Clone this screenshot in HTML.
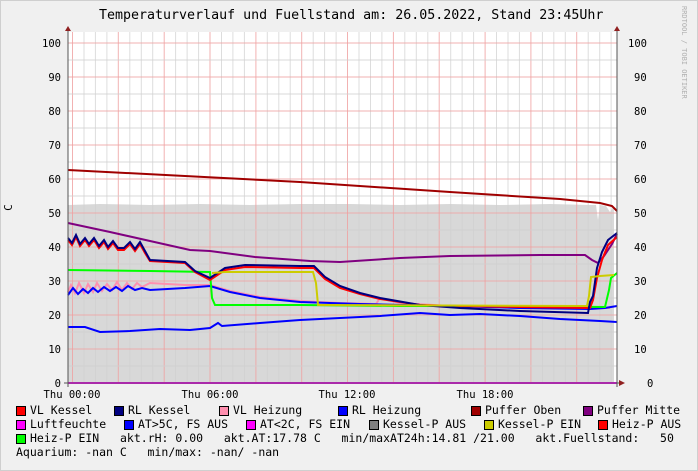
<!DOCTYPE html>
<html><head><meta charset="utf-8"><style>
html,body{margin:0;padding:0}
body{width:698px;height:471px;background:#f0f0f0;position:relative;overflow:hidden;font-family:"DejaVu Sans Mono","Liberation Mono",monospace;color:#000}
.b{position:absolute;left:0;top:0;width:696px;height:469px;border:1px solid #cfcfcf}
.t{position:absolute;white-space:pre}
.sq{position:absolute;width:8px;height:8px;border:1px solid #000}
.lg{font-size:11.5px}
</style></head><body>
<div class="b"></div>
<div class="t" style="left:99px;top:8px;font-size:13.3px">Temperaturverlauf und Fuellstand am: 26.05.2022, Stand 23:45Uhr</div>
<div class="t" style="left:680px;top:6px;font-size:7px;color:#b0b0b0;writing-mode:vertical-rl">RRDTOOL / TOBI OETIKER</div>
<div class="t" style="left:5px;top:201px;font-size:11px;transform:rotate(-90deg)">C</div>
<svg width="698" height="471" style="position:absolute;left:0;top:0">
<rect x="68" y="32" width="549" height="351" fill="#fff"/>
<polygon points="68,205 100,204 150,205 200,204 250,205 300,204 350,204 400,205 450,204 500,205 550,204 590,205 596,205 598,220 600,205 606,206 610,212 614,206 614,383 68,383" fill="#d8d8d8"/>
<g id="grid"></g>
<polyline fill="none" stroke="#a00000" stroke-width="2" points="68,170 300,182 450,192 560,199 600,203 612,206 617,211"/>
<polyline fill="none" stroke="#800080" stroke-width="2" points="68,223 110,232 150,241 190,250 210,251 255,257 310,261 340,262 400,258 450,256 540,255 585,255 592,260 598,263 604,256 612,244 617,234"/>
<polyline fill="none" stroke="#ff8faf" stroke-width="2" points="68,292 71,285 75,293 79,283 84,293 88,284 93,292 97,283 102,291 107,284 112,290 117,282 122,290 127,283 132,289 137,283 142,287 150,283 185,285 210,285 230,291 260,297 300,301 340,303 376,304 380,298 400,303 450,306 520,307 590,307 610,308"/>
<polyline fill="none" stroke="#0000ff" stroke-width="2" points="68,295 73,288 78,294 83,289 88,293 93,288 98,292 104,287 110,291 116,287 122,291 128,286 135,290 142,288 150,290 185,288 210,286 230,292 260,298 300,302 360,304 450,306 520,308 590,309 605,308 617,306"/>
<polyline fill="none" stroke="#00ff00" stroke-width="2" points="68,270 150,271 210,272 212,298 215,305 300,305 400,306 500,306 605,307 609,290 611,278 617,273"/>
<polyline fill="none" stroke="#ff0000" stroke-width="2" points="68,240 72,245 76,237 80,246 85,240 89,246 94,240 99,248 104,242 108,249 113,243 118,250 124,250 130,244 135,251 140,244 145,253 150,261 185,263 195,272 210,280 225,270 245,267 300,268 314,268 325,279 340,288 360,294 380,299 420,305 460,306 520,307 590,308 593,300 597,278 602,260 608,245 617,237"/>
<polyline fill="none" stroke="#000080" stroke-width="2" points="68,238 72,243 76,235 80,244 85,238 89,244 94,238 99,246 104,240 108,247 113,241 118,248 124,248 130,242 135,249 140,242 145,251 150,260 185,262 195,271 210,278 225,268 245,265 300,266 314,266 325,277 340,286 360,293 380,298 420,305 460,308 520,311 588,313 590,302 593,296 597,268 602,252 608,240 617,233"/>
<polyline fill="none" stroke="#cccc00" stroke-width="2" points="212,273 225,272 300,272 313,272 316,283 318,305 320,305 587,306 589,296 591,277 600,276 614,275"/>
<polyline fill="none" stroke="#0000ff" stroke-width="2" points="68,327 85,327 100,332 130,331 160,329 190,330 210,328 218,323 222,326 260,323 300,320 340,318 380,316 420,313 450,315 480,314 520,316 560,319 600,321 617,322"/>
<line x1="68" y1="383" x2="617" y2="383" stroke="#ff00ff" stroke-width="2"/>
<line x1="68" y1="30" x2="68" y2="387" stroke="#555"/>
<line x1="617" y1="30" x2="617" y2="387" stroke="#555"/>
<line x1="64" y1="383" x2="622" y2="383" stroke="#555"/>
<polygon points="65,31 71,31 68,26" fill="#902020"/>
<polygon points="614,31 620,31 617,26" fill="#902020"/>
<polygon points="619,380 619,386 625,383" fill="#902020"/>
<g font-size="10.5" font-family="DejaVu Sans Mono,monospace" fill="#000">
<text x="61" y="47" text-anchor="end">100</text><text x="628" y="47">100</text>
<text x="61" y="81" text-anchor="end">90</text><text x="634" y="81">90</text>
<text x="61" y="115" text-anchor="end">80</text><text x="634" y="115">80</text>
<text x="61" y="149" text-anchor="end">70</text><text x="634" y="149">70</text>
<text x="61" y="183" text-anchor="end">60</text><text x="634" y="183">60</text>
<text x="61" y="217" text-anchor="end">50</text><text x="634" y="217">50</text>
<text x="61" y="251" text-anchor="end">40</text><text x="634" y="251">40</text>
<text x="61" y="285" text-anchor="end">30</text><text x="634" y="285">30</text>
<text x="61" y="319" text-anchor="end">20</text><text x="634" y="319">20</text>
<text x="61" y="353" text-anchor="end">10</text><text x="634" y="353">10</text>
<text x="61" y="387" text-anchor="end">0</text><text x="647" y="387">0</text>
<text x="72" y="398" text-anchor="middle">Thu 00:00</text>
<text x="210" y="398" text-anchor="middle">Thu 06:00</text>
<text x="347" y="398" text-anchor="middle">Thu 12:00</text>
<text x="485" y="398" text-anchor="middle">Thu 18:00</text>
</g>
</svg>
<script>
(function(){var g=document.getElementById('grid'),s='';
for(var x=72.5;x<617;x+=11.46){var i=Math.round((x-72.5)/11.46);var r=i%4==0;s+='<line x1="'+x.toFixed(1)+'" y1="32" x2="'+x.toFixed(1)+'" y2="383" stroke="'+(r?'#f0a0a0':'#d0d0d0')+'" stroke-width="1" opacity="'+(r?0.8:0.7)+'"/>';}
for(var v=5;v<=100;v+=5){var y=383-3.4*v;var r=v%10==0;s+='<line x1="68" y1="'+y+'" x2="617" y2="'+y+'" stroke="'+(r?'#f0a0a0':'#d0d0d0')+'" opacity="0.8"/>';}
g.innerHTML=s;})();
</script>
<div class="lg">
<div class="sq" style="left:16px;top:406px;background:#ff0000"></div><div class="t" style="left:30px;top:403px">VL Kessel</div>
<div class="sq" style="left:114px;top:406px;background:#000080"></div><div class="t" style="left:128px;top:403px">RL Kessel</div>
<div class="sq" style="left:219px;top:406px;background:#ff8faf"></div><div class="t" style="left:233px;top:403px">VL Heizung</div>
<div class="sq" style="left:338px;top:406px;background:#0000ff"></div><div class="t" style="left:352px;top:403px">RL Heizung</div>
<div class="sq" style="left:471px;top:406px;background:#a00000"></div><div class="t" style="left:485px;top:403px">Puffer Oben</div>
<div class="sq" style="left:583px;top:406px;background:#800080"></div><div class="t" style="left:597px;top:403px">Puffer Mitte</div>
<div class="sq" style="left:16px;top:420px;background:#ff00ff"></div><div class="t" style="left:30px;top:417px">Luftfeuchte</div>
<div class="sq" style="left:124px;top:420px;background:#0000ff"></div><div class="t" style="left:138px;top:417px">AT&gt;5C, FS AUS</div>
<div class="sq" style="left:246px;top:420px;background:#ff00ff"></div><div class="t" style="left:260px;top:417px">AT&lt;2C, FS EIN</div>
<div class="sq" style="left:369px;top:420px;background:#808080"></div><div class="t" style="left:383px;top:417px">Kessel-P AUS</div>
<div class="sq" style="left:484px;top:420px;background:#cccc00"></div><div class="t" style="left:498px;top:417px">Kessel-P EIN</div>
<div class="sq" style="left:598px;top:420px;background:#ff0000"></div><div class="t" style="left:612px;top:417px">Heiz-P AUS</div>
<div class="sq" style="left:16px;top:434px;background:#00ff00"></div><div class="t" style="left:30px;top:431px">Heiz-P EIN   akt.rH: 0.00   akt.AT:17.78 C   min/maxAT24h:14.81 /21.00   akt.Fuellstand:   50</div>
<div class="t" style="left:16px;top:445px">Aquarium: -nan C   min/max: -nan/ -nan</div>
</div>
</body></html>
